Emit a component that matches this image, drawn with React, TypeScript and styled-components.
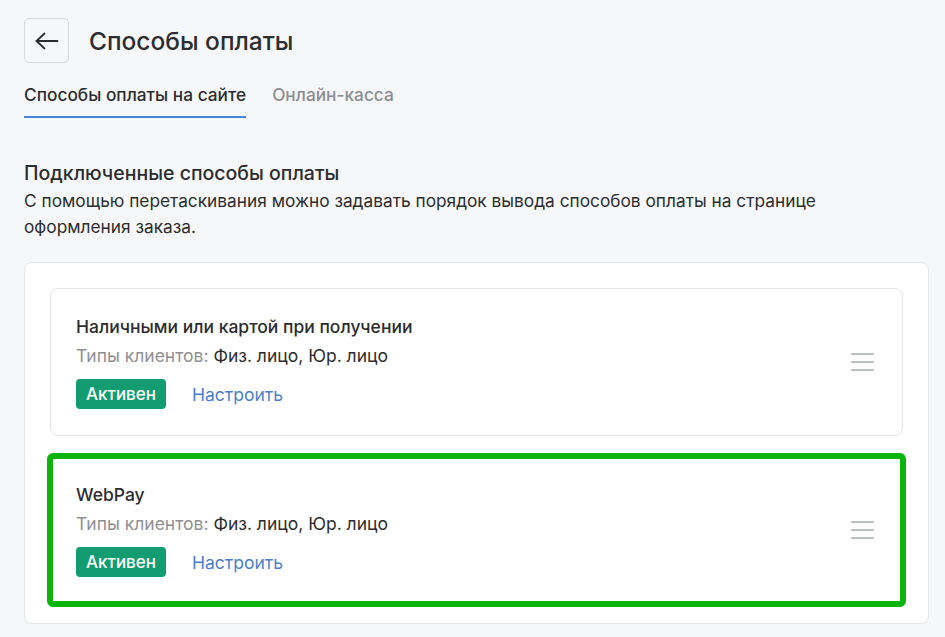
import React from 'react';
import styled, { createGlobalStyle } from 'styled-components';

const GlobalStyle = createGlobalStyle`
  html, body {
    margin: 0;
    padding: 0;
    background: #f6f7f9;
  }
  body {
    font-family: Inter, "Noto Sans", "Liberation Sans", sans-serif;
    color: #2c2d2e;
    -webkit-font-smoothing: antialiased;
  }
`;

const Page = styled.div`
  padding: 18px 16px 14px 24px;
  width: 905px;
`;

const Header = styled.div`
  display: flex;
  align-items: center;
  gap: 20px;
`;

const BackButton = styled.button`
  width: 45px;
  height: 45px;
  border: 1px solid #d6d8dc;
  border-radius: 5px;
  background: transparent;
  display: flex;
  align-items: center;
  justify-content: center;
  padding: 0;
  color: #2c2d2e;
  cursor: pointer;
`;

const Title = styled.h1`
  margin: 0;
  font-size: 24.5px;
  font-weight: 500;
  color: #2c2d2e;
`;

const Tabs = styled.div`
  display: flex;
  gap: 26px;
  margin-top: 22px;
`;

const Tab = styled.div<{ $active?: boolean }>`
  font-size: 17.3px;
  font-weight: 500;
  line-height: 20px;
  padding-bottom: 11px;
  color: ${p => (p.$active ? '#2c2d2e' : '#8b8d91')};
  border-bottom: 2px solid ${p => (p.$active ? '#4a86d8' : 'transparent')};
`;

const Section = styled.div`
  margin-top: 43px;
`;

const SectionTitle = styled.h2`
  margin: 0;
  font-size: 19.5px;
  font-weight: 500;
  line-height: 24px;
`;

const SectionText = styled.p`
  margin: 3px 0 0;
  font-size: 17.3px;
  line-height: 26px;
  color: #2c2d2e;
  max-width: 830px;
`;

const ListPanel = styled.div`
  margin-top: 22px;
  background: #fff;
  border: 1px solid #e4e6ea;
  border-radius: 8px;
  padding: 25px 25px 19px;
  display: flex;
  flex-direction: column;
  gap: 20px;
`;

const MethodCard = styled.div<{ $highlight?: boolean }>`
  display: flex;
  align-items: center;
  justify-content: space-between;
  padding: 25px 28px 26px 25px;
  border: 1px solid #e2e4e8;
  border-radius: 8px;
  background: #fff;
  ${p =>
    p.$highlight &&
    `
    outline: 6px solid #0ab40a;
    outline-offset: -3px;
    border-radius: 3px;
  `}
`;

const MethodInfo = styled.div`
  display: flex;
  flex-direction: column;
`;

const MethodName = styled.div`
  font-size: 17.5px;
  font-weight: 500;
  line-height: 26px;
  color: #2c2d2e;
`;

const ClientTypes = styled.div`
  font-size: 17.5px;
  line-height: 26px;
  margin-top: 3px;
  color: #2c2d2e;

  span {
    color: #8e9094;
  }
`;

const Actions = styled.div`
  display: flex;
  align-items: center;
  gap: 26px;
  margin-top: 10px;
`;

const StatusBadge = styled.span`
  display: inline-flex;
  align-items: center;
  height: 30px;
  padding: 0 10px;
  border-radius: 4px;
  background: #139c70;
  color: #fff;
  font-size: 17px;
  font-weight: 500;
`;

const SetupLink = styled.a`
  font-size: 17.5px;
  color: #4a7fcb;
  text-decoration: none;
  cursor: pointer;
`;

const DragHandle = styled.div`
  width: 23px;
  display: flex;
  flex-direction: column;
  gap: 6px;

  i {
    display: block;
    height: 2px;
    background: #babdc3;
    border-radius: 1px;
  }
`;

const methods = [
  { id: 'cash', name: 'Наличными или картой при получении' },
  { id: 'webpay', name: 'WebPay', highlight: true },
];

export default function App() {
  return (
    <Page>
      <GlobalStyle />
      <Header>
        <BackButton aria-label="Назад">
          <svg width="24" height="24" viewBox="0 0 24 24" fill="none" stroke="currentColor" strokeWidth="1.8" strokeLinecap="round" strokeLinejoin="round">
            <path d="M22.5 12H1.5" />
            <path d="M9.5 4.5L1.5 12l8 7.5" />
          </svg>
        </BackButton>
        <Title>Способы оплаты</Title>
      </Header>

      <Tabs>
        <Tab $active>Способы оплаты на сайте</Tab>
        <Tab>Онлайн-касса</Tab>
      </Tabs>

      <Section>
        <SectionTitle>Подключенные способы оплаты</SectionTitle>
        <SectionText>
          С помощью перетаскивания можно задавать порядок вывода способов оплаты на странице оформления заказа.
        </SectionText>
      </Section>

      <ListPanel>
        {methods.map(m => (
          <MethodCard key={m.id} $highlight={m.highlight}>
            <MethodInfo>
              <MethodName>{m.name}</MethodName>
              <ClientTypes>
                <span>Типы клиентов:</span> Физ. лицо, Юр. лицо
              </ClientTypes>
              <Actions>
                <StatusBadge>Активен</StatusBadge>
                <SetupLink>Настроить</SetupLink>
              </Actions>
            </MethodInfo>
            <DragHandle>
              <i />
              <i />
              <i />
            </DragHandle>
          </MethodCard>
        ))}
      </ListPanel>
    </Page>
  );
}
